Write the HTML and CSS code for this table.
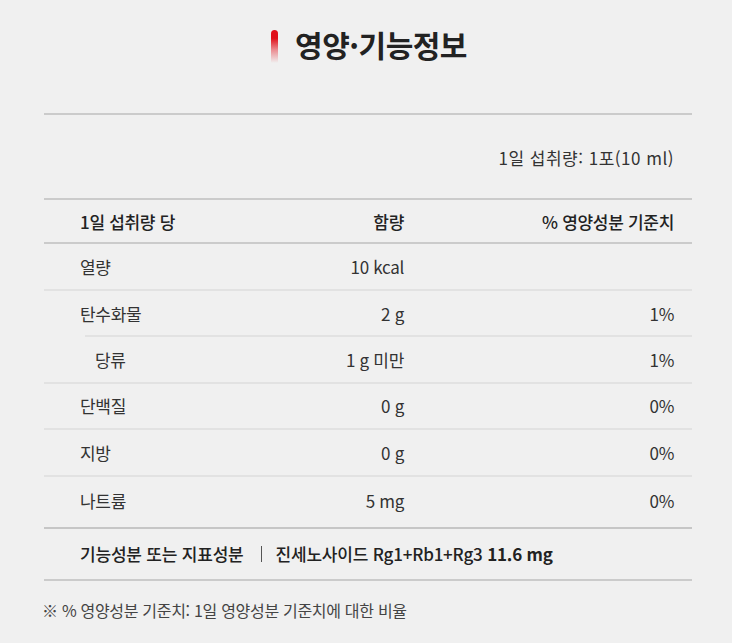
FILE: index.html
```html
<!DOCTYPE html>
<html lang="ko">
<head>
<meta charset="utf-8">
<link rel="stylesheet" href="styles.css">
</head>
<body>
<div class="page">
  <h1 class="title"><span class="bar"></span><span class="title-text">영양·기능정보</span></h1>
  <div class="table">
    <div class="serving">1일 섭취량: 1포(10 ml)</div>
    <div class="row head">
      <span>1일 섭취량 당</span><span class="num">함량</span><span class="num">% 영양성분 기준치</span>
    </div>
    <div class="row">
      <span>열량</span><span class="num">10 kcal</span><span class="num"></span>
    </div>
    <div class="row sub-next">
      <span>탄수화물</span><span class="num">2 g</span><span class="num">1%</span>
    </div>
    <div class="row sub">
      <span class="indent">당류</span><span class="num">1 g 미만</span><span class="num">1%</span>
    </div>
    <div class="row">
      <span>단백질</span><span class="num">0 g</span><span class="num">0%</span>
    </div>
    <div class="row">
      <span>지방</span><span class="num">0 g</span><span class="num">0%</span>
    </div>
    <div class="row last">
      <span>나트륨</span><span class="num">5 mg</span><span class="num">0%</span>
    </div>
    <div class="func">
      <span>기능성분 또는 지표성분</span><span class="sep"></span><span>진세노사이드 Rg1+Rb1+Rg3 <b>11.6 mg</b></span>
    </div>
  </div>
  <p class="note">※ % 영양성분 기준치: 1일 영양성분 기준치에 대한 비율</p>
</div>
</body>
</html>
```

FILE: styles.css
```css
* { box-sizing: border-box; }
html, body { margin: 0; padding: 0; }
body {
  background: #f0f0f0;
  font-family: "Noto Sans CJK KR", "Noto Sans", sans-serif;
  color: #333;
}
.page {
  width: 648px;
  margin-left: 44px;
}
.title {
  margin: 0;
  height: 113px;
  display: flex;
  justify-content: center;
  align-items: flex-start;
  padding-top: 24px;
  padding-left: 2px;
  font-size: 30px;
  font-weight: 700;
  color: #222;
  line-height: 40px;
  letter-spacing: -0.5px;
}
.bar {
  width: 7px;
  height: 33px;
  margin-top: 6px;
  margin-right: 17px;
  border-radius: 4px 4px 0 0;
  background: linear-gradient(to bottom, #e0101a 0%, #e0101a 25%, rgba(230, 40, 50, 0.5) 60%, rgba(240, 240, 240, 0) 100%);
}
.table {
  border-top: 2px solid #cbcbcb;
}
.serving {
  height: 85px;
  border-bottom: 2px solid #cbcbcb;
  display: flex;
  align-items: center;
  justify-content: flex-end;
  padding-right: 18px;
  padding-top: 1px;
  font-size: 17px;
  color: #333;
  letter-spacing: 0.5px;
}
.row {
  display: grid;
  grid-template-columns: 200px 124px 1fr;
  align-items: center;
  height: 46.5px;
  padding: 0 18px 0 36px;
  border-bottom: 2px solid #e2e2e2;
  font-size: 17px;
  letter-spacing: -0.3px;
}
.row .num { text-align: right; }
.row.head {
  height: 44px;
  border-bottom: 2px solid #cbcbcb;
  color: #222;
  font-weight: 500;
}
.row.sub-next {
  border-bottom: none;
  background: linear-gradient(#e2e2e2, #e2e2e2) no-repeat 41px 100% / calc(100% - 41px) 2px;
}
.indent { padding-left: 15px; }
.row.last {
  height: 52px;
  padding-bottom: 3px;
  border-bottom: 2px solid #c6c6c6;
}
.func {
  height: 52px;
  display: flex;
  align-items: center;
  padding-left: 36px;
  border-bottom: 2px solid #cbcbcb;
  font-size: 17px;
  font-weight: 500;
  color: #222;
  letter-spacing: -0.2px;
}
.func b { font-weight: 700; }
.sep {
  width: 1px;
  height: 16px;
  background: #555;
  margin: 0 14px 0 17px;
}
.note {
  margin: 17px 0 0 -2px;
  font-size: 16px;
  color: #444;
  letter-spacing: -0.3px;
}
```
